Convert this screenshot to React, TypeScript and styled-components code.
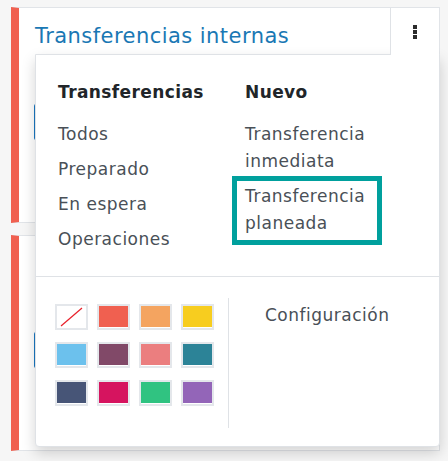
import React from "react";
import styled, { createGlobalStyle } from "styled-components";

const Global = createGlobalStyle`
  html, body { margin: 0; padding: 0; }
  body {
    background: #f6f6f6;
    font-family: "DejaVu Sans", "Noto Sans", sans-serif;
    width: 448px;
    height: 461px;
    overflow: hidden;
  }
  *, *::before, *::after { box-sizing: border-box; }
`;

const Board = styled.div`
  display: flex;
  flex-direction: column;
  gap: 12px;
  padding: 7px 8px 0 11px;
`;

const Card = styled.div<{ $raised?: boolean }>`
  position: relative;
  z-index: ${(p) => (p.$raised ? 2 : 0)};
  height: 216px;
  background: #fff;
  border: 1px solid #e1e4e8;
  border-left: 8px solid #f06050;
  display: flex;
  flex-direction: column;
`;

const CardHeader = styled.div`
  display: flex;
  align-items: flex-start;
  height: 46px;
`;

const Title = styled.div`
  flex: 1;
  padding: 16px 0 0 16px;
  font-size: 21px;
  line-height: 25px;
  letter-spacing: 0.45px;
  color: #1a78b4;
  white-space: nowrap;
`;

const Toggle = styled.div`
  position: relative;
  z-index: 4;
  width: 49px;
  height: 47px;
  background: #fff;
  border-left: 1px solid #dfe2e6;
  display: flex;
  align-items: flex-start;
  justify-content: center;
  padding-top: 17px;
`;

const CardBody = styled.div`
  padding: 50px 0 0 15px;
`;

const PrimaryButton = styled.div`
  width: 120px;
  height: 36px;
  background: #1a78c2;
  border-radius: 2px;
`;

const Menu = styled.div`
  position: absolute;
  z-index: 3;
  left: 16px;
  top: 46px;
  width: 405px;
  background: #fff;
  border: 1px solid #dfe2e6;
  border-radius: 0 0 4px 4px;
  box-shadow: 0 6px 14px rgba(0, 0, 0, 0.17);
  display: flex;
  flex-direction: column;
`;

const TopSection = styled.div`
  display: grid;
  grid-template-columns: 187px 1fr;
  padding: 24px 0 20px 22px;
`;

const Column = styled.div`
  display: flex;
  flex-direction: column;
`;

const Heading = styled.div`
  font-weight: bold;
  font-size: 17px;
  line-height: 27px;
  letter-spacing: 0.4px;
  color: #212529;
  margin-bottom: 10px;
`;

const Item = styled.div<{ $marked?: boolean }>`
  position: relative;
  padding: 5px 0 3px;
  font-size: 17px;
  line-height: 27px;
  letter-spacing: 0.5px;
  color: #495057;
  &::after {
    content: "";
    display: ${(p) => (p.$marked ? "block" : "none")};
    position: absolute;
    left: -13px;
    top: -2px;
    bottom: -5px;
    width: 150px;
    border: 5px solid #00a09d;
  }
`;

const BottomSection = styled.div`
  display: flex;
  border-top: 1px solid #dfe2e6;
  padding: 21px 0 18px 19px;
`;

const ColorPanel = styled.div`
  display: grid;
  grid-template-columns: repeat(4, 33px);
  grid-auto-rows: 26px;
  column-gap: 9px;
  row-gap: 12px;
  padding: 6px 14px 22px 0;
  border-right: 1px solid #dfe2e6;
`;

const Swatch = styled.div<{ $color: string }>`
  background: ${(p) => p.$color};
  border: 2px solid #e4e7eb;
  box-shadow: inset 0 -1px 0 #fff;
  display: flex;
`;

const SettingsPanel = styled.div`
  padding: 4px 0 0 36px;
  font-size: 17px;
  line-height: 27px;
  letter-spacing: 0.5px;
  color: #495057;
`;

const colors = [
  "#ffffff",
  "#f06050",
  "#f4a460",
  "#f7cd1f",
  "#6cc1ed",
  "#814968",
  "#eb7e7f",
  "#2c8397",
  "#475577",
  "#d6145f",
  "#30c381",
  "#9365b8",
];

const Kebab = () => (
  <svg width="4" height="14" viewBox="0 0 4 14">
    <rect x="0" y="0" width="4" height="4" fill="#2b2b2b" />
    <rect x="0" y="5" width="4" height="4" fill="#2b2b2b" />
    <rect x="0" y="10" width="4" height="4" fill="#2b2b2b" />
  </svg>
);

const NoColor = () => (
  <svg width="29" height="22" viewBox="0 0 29 22">
    <line x1="4" y1="20" x2="25" y2="2" stroke="#e8202a" strokeWidth="1.2" />
  </svg>
);

export default function App() {
  return (
    <>
      <Global />
      <Board>
        <Card $raised>
          <CardHeader>
            <Title>Transferencias internas</Title>
            <Toggle>
              <Kebab />
            </Toggle>
          </CardHeader>
          <CardBody>
            <PrimaryButton />
          </CardBody>
          <Menu>
            <TopSection>
              <Column>
                <Heading>Transferencias</Heading>
                <Item>Todos</Item>
                <Item>Preparado</Item>
                <Item>En espera</Item>
                <Item>Operaciones</Item>
              </Column>
              <Column>
                <Heading>Nuevo</Heading>
                <Item>
                  Transferencia
                  <br />
                  inmediata
                </Item>
                <Item $marked>
                  Transferencia
                  <br />
                  planeada
                </Item>
              </Column>
            </TopSection>
            <BottomSection>
              <ColorPanel>
                {colors.map((c, i) => (
                  <Swatch key={i} $color={c}>
                    {i === 0 && <NoColor />}
                  </Swatch>
                ))}
              </ColorPanel>
              <SettingsPanel>Configuración</SettingsPanel>
            </BottomSection>
          </Menu>
        </Card>
        <Card>
          <CardHeader>
            <Title>Recepciones</Title>
            <Toggle>
              <Kebab />
            </Toggle>
          </CardHeader>
          <CardBody>
            <PrimaryButton />
          </CardBody>
        </Card>
      </Board>
    </>
  );
}
